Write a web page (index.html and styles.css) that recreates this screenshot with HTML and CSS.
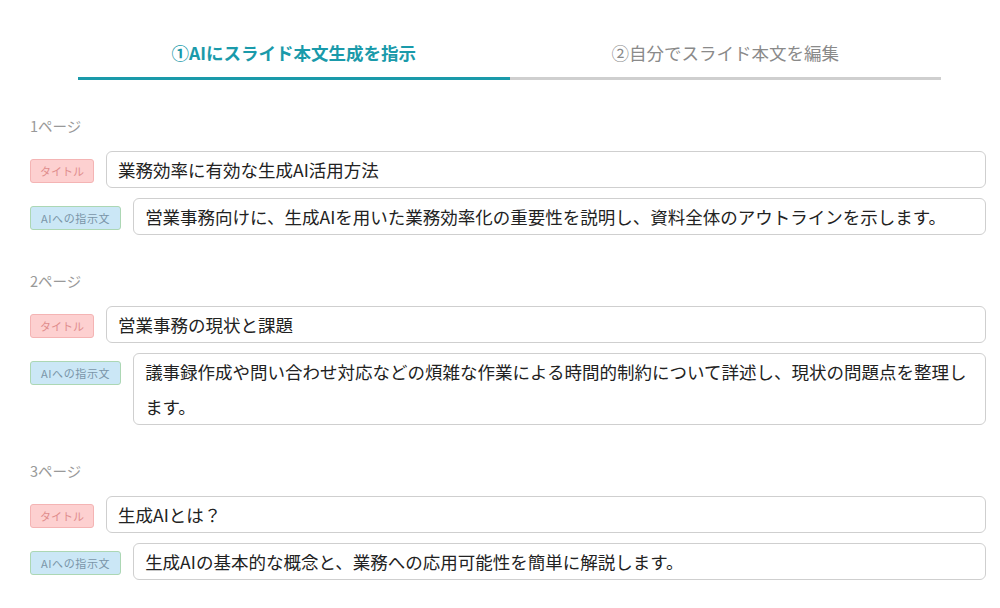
FILE: index.html
```html
<!DOCTYPE html>
<html lang="ja">
<head>
  <meta charset="UTF-8" />
  <title>スライド本文</title>
  <link rel="stylesheet" href="styles.css">
</head>
<body>

  <div class="page">
    <div class="tabs">
      <div class="tab active">①AIにスライド本文生成を指示</div>
      <div class="tab">②自分でスライド本文を編集</div>
    </div>

    <div class="section">
      <div class="page-label">1ページ</div>
      <div class="row">
        <span class="badge badge-title">タイトル</span>
        <div class="field">業務効率に有効な生成AI活用方法</div>
      </div>
      <div class="row">
        <span class="badge badge-ai">AIへの指示文</span>
        <div class="field">営業事務向けに、生成AIを用いた業務効率化の重要性を説明し、資料全体のアウトラインを示します。</div>
      </div>
    </div>

    <div class="section">
      <div class="page-label">2ページ</div>
      <div class="row">
        <span class="badge badge-title">タイトル</span>
        <div class="field">営業事務の現状と課題</div>
      </div>
      <div class="row">
        <span class="badge badge-ai">AIへの指示文</span>
        <div class="field">議事録作成や問い合わせ対応などの煩雑な作業による時間的制約について詳述し、現状の問題点を整理します。</div>
      </div>
    </div>

    <div class="section">
      <div class="page-label">3ページ</div>
      <div class="row">
        <span class="badge badge-title">タイトル</span>
        <div class="field">生成AIとは？</div>
      </div>
      <div class="row">
        <span class="badge badge-ai">AIへの指示文</span>
        <div class="field">生成AIの基本的な概念と、業務への応用可能性を簡単に解説します。</div>
      </div>
    </div>
  </div>

</body>
</html>
```

FILE: styles.css
```css
* {
  box-sizing: border-box;
}

body {
  margin: 0;
  padding: 0;
  background: #fff;
  font-family: "Noto Sans CJK JP", "Noto Sans", sans-serif;
  color: #222;
}

.page {
  padding: 0 14px 0 30px;
}

/* tabs */
.tabs {
  display: flex;
  margin: 0 45px 0 48px;
}

.tab {
  flex: 1;
  text-align: center;
  font-size: 17.5px;
  line-height: 25px;
  padding: 40px 0 12px;
  color: #8a8a8a;
  border-bottom: 3px solid #cfcfcf;
}

.tab.active {
  color: #1a9aaa;
  font-weight: bold;
  border-bottom-color: #1a9aaa;
}

/* page sections */
.section {
  margin-top: 36px;
}

.page-label {
  font-size: 14.5px;
  line-height: 20px;
  color: #999;
  margin-bottom: 15px;
}

.row {
  display: flex;
  align-items: flex-start;
  gap: 12px;
  margin-bottom: 10px;
}

.badge {
  flex: none;
  margin-top: 8px;
  height: 24px;
  line-height: 22px;
  padding: 0 9px;
  font-size: 11px;
  border-radius: 3px;
  border: 1px solid;
}

.badge-title {
  background: #fdd0d0;
  border-color: #f4b4b4;
  color: #e08c8c;
}

.badge-ai {
  background: #cbe7f6;
  border-color: #acd7b4;
  color: #7a95a8;
  padding: 0 10px;
  letter-spacing: 0.6px;
}

.field {
  flex: 1;
  font-size: 17.5px;
  line-height: 35px;
  padding: 0 11px;
  border: 1px solid #cfcfcf;
  border-radius: 6px;
  background: #fff;
}
```
